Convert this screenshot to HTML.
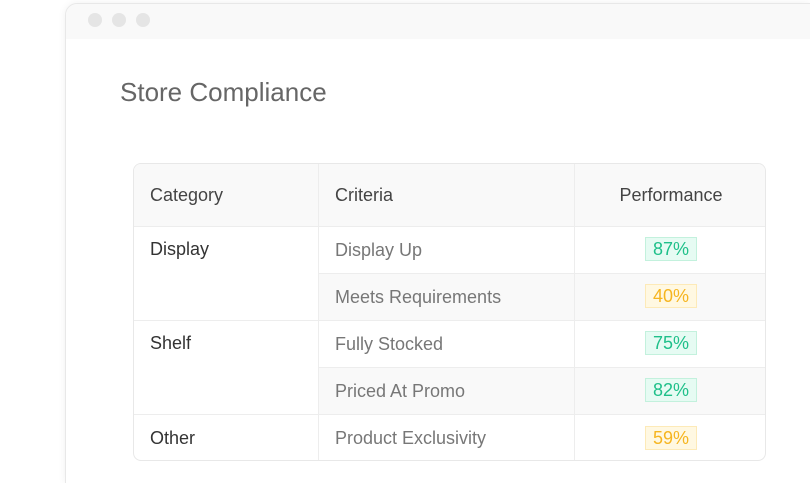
<!DOCTYPE html>
<html style="overflow:hidden;height:483px"><head><style>
body{margin:0;width:810px;height:483px;background:#fff;position:relative;overflow:hidden;font-family:"Liberation Sans",sans-serif}
.win{position:absolute;left:65px;top:3px;width:745px;height:480px;border:1px solid #e8e8e8;border-right:0;border-bottom:0;border-radius:12px 0 0 0;box-shadow:0 0 8px rgba(0,0,0,0.06);background:#fff;overflow:hidden;box-sizing:border-box}
.bar{height:35px;background:#f9f9f9}
.dot{position:absolute;top:9px;width:14px;height:14px;border-radius:50%;background:#e5e5e5}
h1{position:absolute;left:120px;top:77px;margin:0;font-weight:normal;font-size:26px;color:#666}
.c{position:absolute;box-sizing:border-box;border-right:1px solid #ededed;border-bottom:1px solid #ededed;font-size:18px;padding-left:16px;display:flex;align-items:center}
.tbl{position:absolute;left:133px;top:163px;width:633px;height:298px;border:1px solid #e8e8e8;border-radius:8px;overflow:hidden;box-sizing:border-box}
.b{display:inline-block;width:52px;height:24px;line-height:23px;text-align:center;font-size:18px;box-sizing:border-box;margin-top:-2px}
.g{background:#e6fbf3;border:1px solid #c3f1dd;color:#1fc08a}
.y{background:#fff8e2;border:1px solid #fdeab8;color:#f6b520}
</style></head><body>
<div class="win"><div class="bar"></div>
<div class="dot" style="left:22px"></div><div class="dot" style="left:46px"></div><div class="dot" style="left:70px"></div></div>
<h1>Store Compliance</h1>
<div class="tbl">
<div class="c" style="left:0;top:0;width:185px;height:63px;background:#f9f9f9;color:#444">Category</div>
<div class="c" style="left:185px;top:0;width:256px;height:63px;background:#f9f9f9;color:#444">Criteria</div>
<div class="c" style="left:441px;top:0;width:192px;height:63px;background:#f9f9f9;color:#444;justify-content:center;padding:0;border-right:0">Performance</div>

<div class="c" style="left:0;top:63px;width:185px;height:94px;color:#333;align-items:flex-start;padding-top:12px">Display</div>
<div class="c" style="left:0;top:157px;width:185px;height:94px;color:#333;align-items:flex-start;padding-top:12px">Shelf</div>
<div class="c" style="left:0;top:251px;width:185px;height:47px;color:#333;border-bottom:0">Other</div>

<div class="c" style="left:185px;top:63px;width:256px;height:47px;color:#777">Display Up</div>
<div class="c" style="left:185px;top:110px;width:256px;height:47px;color:#777;background:#f9f9f9">Meets Requirements</div>
<div class="c" style="left:185px;top:157px;width:256px;height:47px;color:#777">Fully Stocked</div>
<div class="c" style="left:185px;top:204px;width:256px;height:47px;color:#777;background:#f9f9f9">Priced At Promo</div>
<div class="c" style="left:185px;top:251px;width:256px;height:47px;color:#777;border-bottom:0">Product Exclusivity</div>

<div class="c" style="left:441px;top:63px;width:192px;height:47px;justify-content:center;padding:0;border-right:0"><span class="b g">87%</span></div>
<div class="c" style="left:441px;top:110px;width:192px;height:47px;justify-content:center;padding:0;border-right:0;background:#f9f9f9"><span class="b y">40%</span></div>
<div class="c" style="left:441px;top:157px;width:192px;height:47px;justify-content:center;padding:0;border-right:0"><span class="b g">75%</span></div>
<div class="c" style="left:441px;top:204px;width:192px;height:47px;justify-content:center;padding:0;border-right:0;background:#f9f9f9"><span class="b g">82%</span></div>
<div class="c" style="left:441px;top:251px;width:192px;height:47px;justify-content:center;padding:0;border-right:0;border-bottom:0"><span class="b y">59%</span></div>
</div>
</body></html>
